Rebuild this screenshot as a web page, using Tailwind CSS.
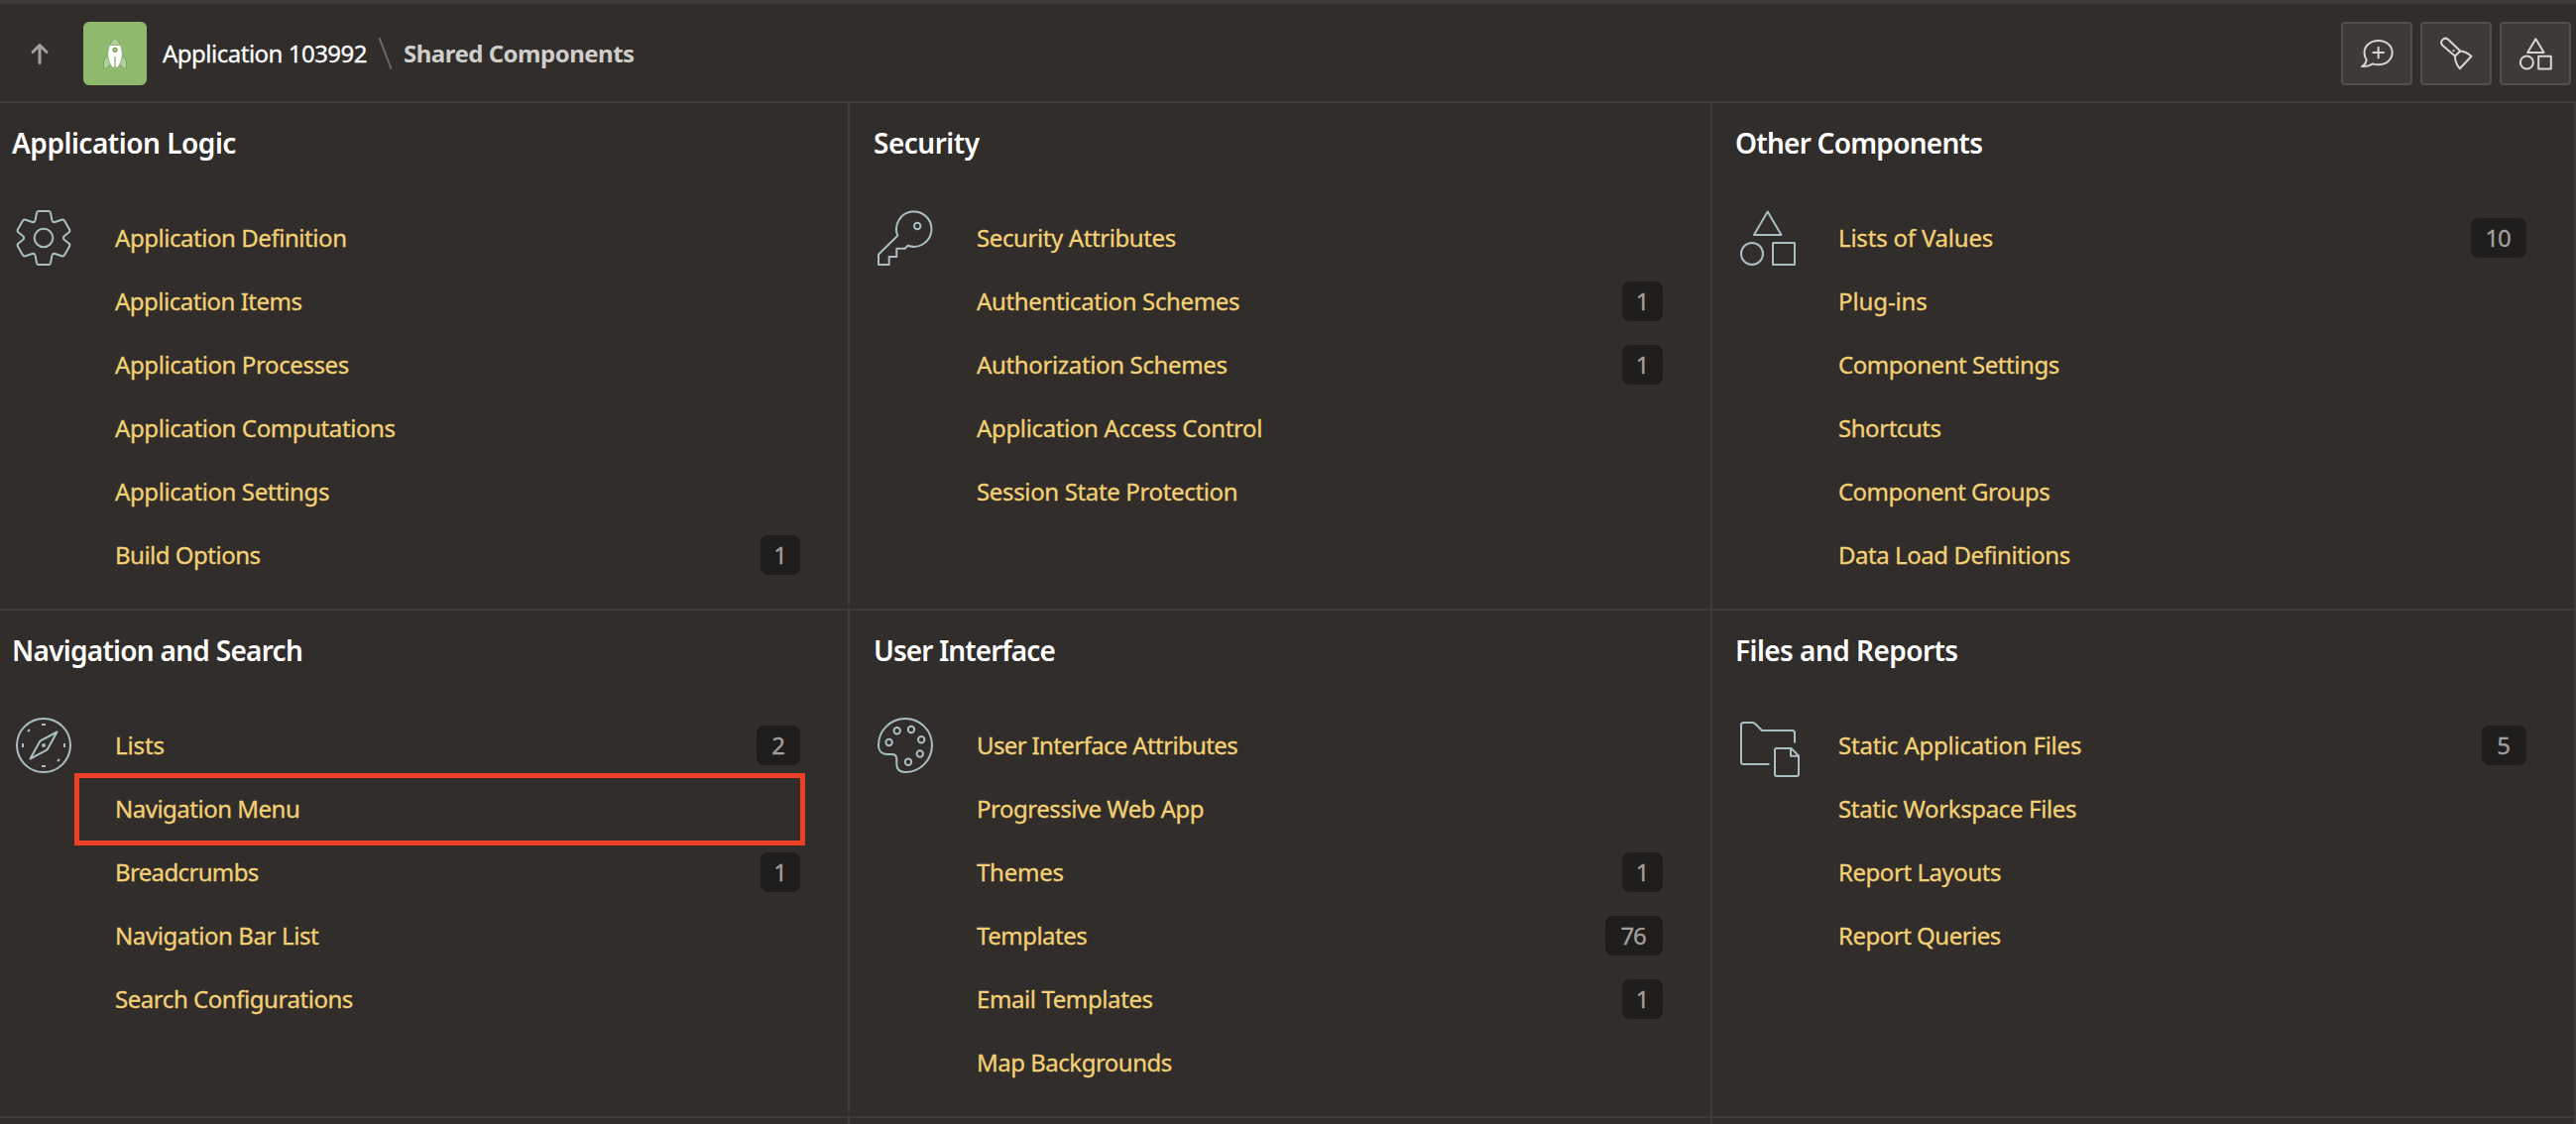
<!DOCTYPE html>
<html lang="en">
<head>
<meta charset="utf-8">
<title>Shared Components</title>
<script src="https://cdn.jsdelivr.net/npm/@tailwindcss/browser@4"></script>
</head>
<body class="h-[1134px] overflow-hidden bg-[#312d2a] font-['Noto_Sans','Open_Sans',sans-serif] text-[24px] leading-8 tracking-[-0.45px] text-white">
<header class="flex h-[104px] items-center border-t-4 border-b-2 border-[#3e3a37] pt-0.5 pr-[5px] pl-7">
  <a href="#" aria-label="Up"><svg class="size-6 text-[#a3a09d]" viewBox="0 0 24 24" fill="none" stroke="currentColor" stroke-width="3" stroke-linecap="round" stroke-linejoin="round"><path d="M12 21.500V3.500M5 10.500l7-7 7 7"/></svg></a>
  <span class="ml-8 flex size-16 items-center justify-center rounded-md bg-[#8fb96d]">
    <svg class="h-8 w-6 overflow-visible" viewBox="0 0 24 32">
      <path d="M5.500 18.500C2.500 20 .5 22 .5 25v6.500c1.300 0 2.300-.3 3-1L7.500 27zM18.500 18.500c3 1.500 5 3.500 5 6.500v6.500c-1.300 0-2.300-.3-3-1L16.500 27z" fill="#b2cf9b" stroke="#7aa55b"/>
      <path d="M12 .5C9.500 2.500 7.500 5 6.500 7.500h11C16.500 5 14.500 2.500 12 .5z" fill="#b2cf9b" stroke="#7aa55b"/>
      <path d="M6.500 7.500h11c2.500 7 2.500 14-2 21.500Q14.500 30.200 12 30.200T8.500 29C4 21.500 4 14.500 6.500 7.500z" fill="#fff" stroke="#8aad70" stroke-width=".8"/>
      <circle cx="12" cy="12.300" r="2" fill="#b2cf9b" stroke="#759f56" stroke-width="1.300"/>
      <path d="M12 19v12.500" stroke="#8fb072" stroke-width="1.400"/>
    </svg>
  </span>
  <nav class="flex items-center">
    <a href="#" class="ml-4 w-[216px] tracking-[-0.5px] [-webkit-text-stroke:0.3px]">Application 103992</a>
    <svg class="h-8 w-4 text-[#6c6966]" viewBox="0 0 16 32" fill="none" stroke="currentColor" stroke-width="2"><path d="M2.500 0l12 31.500"/></svg>
    <span class="ml-[11px] font-bold tracking-[-0.5px] text-[#d0cecb]">Shared Components</span>
  </nav>
  <div class="ml-auto flex gap-2 text-[#d8d6d3]">
    <button class="flex h-16 w-[72px] items-center justify-center rounded border-2 border-[#53504b] bg-[#3e3b36]"><svg class="size-8 overflow-visible" viewBox="0 0 32 32" fill="none" stroke="currentColor" stroke-width="2" stroke-linecap="round" stroke-linejoin="round"><path d="M17.700 2.900c8 0 14 5.400 14 12.200s-6 12.200-14 12.200c-2 0-4-.3-5.700-1-2 1.500-5.500 2.900-11 2.700 2.300-1.300 4.300-2.800 4.700-6.700-1.400-2-2.200-4.500-2.200-7.200 0-6.800 6.200-12.200 14.200-12.200zM17.700 9.800v10.600M12.400 15.100H23"/></svg></button>
    <button class="flex h-16 w-[72px] items-center justify-center rounded border-2 border-[#53504b] bg-[#3e3b36]"><svg class="size-8 overflow-visible" viewBox="0 0 32 32" fill="none" stroke="currentColor" stroke-width="2" stroke-linejoin="round"><path d="M15 18.500L2.300 7.700C-1 4 4-1.500 8 1.800L20.300 13.500 15 18.500M20.300 13.500c4 .3 7.500 2 11.200 5.300L19.800 31.200C16.700 27.500 14.800 23 15 18.500"/><circle cx="13.600" cy="13" r="1.100" fill="currentColor" stroke="none"/></svg></button>
    <button class="flex h-16 w-[72px] items-center justify-center rounded border-2 border-[#53504b] bg-[#3e3b36]"><svg class="size-8 overflow-visible" viewBox="0 0 32 32" fill="none" stroke="currentColor" stroke-width="2" stroke-linejoin="round"><path d="M16.400 1.300L24.600 15H8.200z"/><circle cx="7.400" cy="25" r="6.500"/><path d="M19.200 18.800h12.600v12.600H19.200z"/></svg></button>
  </div>
</header>

<main class="grid grid-cols-[857px_870px_871px] grid-rows-[512px_512px_6px] text-[#f4d175]">
  <section class="flex flex-col border-r-2 border-b-2 border-[#3e3a37] pt-6 pr-12 pl-3">
    <h2 class="text-[28px] font-semibold tracking-[-0.47px] text-white">Application Logic</h2>
    <div class="mt-12 flex pl-1">
      <svg class="mt-1 size-14 shrink-0 text-[#aabfc1]" viewBox="0 0 56 56" fill="none" stroke="currentColor" stroke-width="2" stroke-linejoin="round"><path d="M23 1h10q1.600 0 2 1.800l1.400 7.500q.7 2.300 3 1.700l7-2.300q1.800-.5 2.700 1l5 8.700q.8 1.600-.4 2.800l-4.700 3.800q-2.300 2 0 4l4.700 3.800q1.200 1.200.4 2.800l-5 8.700q-.9 1.500-2.700 1l-7-2.300q-2.300-.6-3 1.700L35 53.200q-.4 1.800-2 1.800H23q-1.600 0-2-1.800l-1.400-7.500q-.7-2.300-3-1.700l-7 2.300q-1.800.5-2.700-1l-5-8.700q-.8-1.600.4-2.800L7 30q2.300-2 0-4l-4.700-3.800q-1.200-1.200-.4-2.800l5-8.700q.9-1.500 2.700-1l7 2.300q2.300.6 3-1.700L21 2.800Q21.400 1 23 1z"/><circle cx="28" cy="28" r="9.300"/></svg>
      <ul class="ml-11 grow [-webkit-text-stroke:0.3px]">
        <li class="flex h-16 items-center"><a href="#">Application Definition</a></li>
        <li class="flex h-16 items-center"><a href="#" class="tracking-[-0.5px]">Application Items</a></li>
        <li class="flex h-16 items-center"><a href="#" class="tracking-[-0.4px]">Application Processes</a></li>
        <li class="flex h-16 items-center"><a href="#" class="tracking-[-0.4px]">Application Computations</a></li>
        <li class="flex h-16 items-center"><a href="#" class="tracking-[-0.4px]">Application Settings</a></li>
        <li class="flex h-16 items-center justify-between"><a href="#" class="tracking-[-0.5px]">Build Options</a><span class="flex h-10 w-10 items-center justify-center rounded-lg bg-[#201e1c] text-[#a3a19e]">1</span></li>
      </ul>
    </div>
  </section>

  <section class="flex flex-col border-r-2 border-b-2 border-[#3e3a37] pt-6 pr-12 pl-6">
    <h2 class="text-[28px] font-semibold tracking-[-0.5px] text-white">Security</h2>
    <div class="mt-12 flex pl-1">
      <svg class="mt-1 size-14 shrink-0 text-[#aabfc1]" viewBox="0 0 56 56" fill="none" stroke="currentColor" stroke-width="2" stroke-linejoin="round"><path d="M20.300 25.700A17.700 17.700 0 1 1 30.500 35.700l-2.800 3h-8.400V47h-7.600v8H1V44.700z"/><circle cx="40.200" cy="16" r="3.200"/></svg>
      <ul class="ml-11 grow [-webkit-text-stroke:0.3px]">
        <li class="flex h-16 items-center"><a href="#" class="tracking-[-0.4px]">Security Attributes</a></li>
        <li class="flex h-16 items-center justify-between"><a href="#" class="tracking-[-0.35px]">Authentication Schemes</a><span class="flex h-10 w-[41px] items-center justify-center rounded-lg bg-[#201e1c] text-[#a3a19e]">1</span></li>
        <li class="flex h-16 items-center justify-between"><a href="#" class="tracking-[-0.35px]">Authorization Schemes</a><span class="flex h-10 w-[41px] items-center justify-center rounded-lg bg-[#201e1c] text-[#a3a19e]">1</span></li>
        <li class="flex h-16 items-center"><a href="#" class="tracking-[-0.35px]">Application Access Control</a></li>
        <li class="flex h-16 items-center"><a href="#" class="tracking-[-0.35px]">Session State Protection</a></li>
      </ul>
    </div>
  </section>

  <section class="flex flex-col border-r-2 border-b-2 border-[#3e3a37] pt-6 pr-12 pl-6">
    <h2 class="-ml-px text-[28px] font-semibold tracking-[-0.75px] text-white">Other Components</h2>
    <div class="mt-12 flex pl-1">
      <svg class="mt-1 size-14 shrink-0 text-[#aabfc1]" viewBox="0 0 56 56" fill="none" stroke="currentColor" stroke-width="2" stroke-linejoin="round"><path d="M27.700 1.500L41.500 25H14z"/><circle cx="12" cy="44" r="11"/><rect x="33" y="33" width="22" height="22" rx=".5"/></svg>
      <ul class="ml-[43px] grow [-webkit-text-stroke:0.3px]">
        <li class="flex h-16 items-center justify-between"><a href="#" class="tracking-[-0.2px]">Lists of Values</a><span class="flex h-10 w-14 items-center justify-center rounded-lg bg-[#201e1c] pr-0.5 tracking-[-1.2px] text-[#a3a19e]">10</span></li>
        <li class="flex h-16 items-center"><a href="#" class="tracking-[-0.1px]">Plug-ins</a></li>
        <li class="flex h-16 items-center"><a href="#">Component Settings</a></li>
        <li class="flex h-16 items-center"><a href="#">Shortcuts</a></li>
        <li class="flex h-16 items-center"><a href="#" class="tracking-[-0.55px]">Component Groups</a></li>
        <li class="flex h-16 items-center"><a href="#">Data Load Definitions</a></li>
      </ul>
    </div>
  </section>

  <section class="flex flex-col border-r-2 border-b-2 border-[#3e3a37] pt-6 pr-12 pl-3">
    <h2 class="text-[28px] font-semibold tracking-[-0.72px] text-white">Navigation and Search</h2>
    <div class="mt-12 flex pl-1">
      <svg class="mt-1 size-14 shrink-0 text-[#aabfc1]" viewBox="0 0 56 56" fill="none" stroke="currentColor" stroke-width="2" stroke-linejoin="round"><circle cx="28" cy="28" r="27"/><path d="M26 7h4M26 49h4M7 26v4M49 26v4M12 14l2-2M42 44l2-2M41.500 14.500L24.300 23.700 14.500 41.500 31.700 32.300z"/><circle cx="28" cy="28" r="2" fill="currentColor" stroke="none"/></svg>
      <ul class="ml-11 grow [-webkit-text-stroke:0.3px]">
        <li class="flex h-16 items-center justify-between"><a href="#" class="tracking-[-0.1px]">Lists</a><span class="flex h-10 w-11 items-center justify-center rounded-lg bg-[#201e1c] text-[#a3a19e]">2</span></li>
        <li class="relative flex h-16 items-center"><a href="#" class="tracking-[-0.5px]">Navigation Menu</a><span class="pointer-events-none absolute -top-1 -right-[5px] -left-[41px] h-[73px] border-5 border-[#ee4026]"></span></li>
        <li class="flex h-16 items-center justify-between"><a href="#" class="tracking-[-0.65px]">Breadcrumbs</a><span class="flex h-10 w-10 items-center justify-center rounded-lg bg-[#201e1c] text-[#a3a19e]">1</span></li>
        <li class="flex h-16 items-center"><a href="#" class="tracking-[-0.4px]">Navigation Bar List</a></li>
        <li class="flex h-16 items-center"><a href="#">Search Configurations</a></li>
      </ul>
    </div>
  </section>

  <section class="flex flex-col border-r-2 border-b-2 border-[#3e3a37] pt-6 pr-12 pl-6">
    <h2 class="text-[28px] font-semibold tracking-[-0.93px] text-white">User Interface</h2>
    <div class="mt-12 flex pl-1">
      <svg class="mt-1 size-14 shrink-0 text-[#aabfc1]" viewBox="0 0 56 56" fill="none" stroke="currentColor" stroke-width="2" stroke-linejoin="round"><path d="M1 28a27 27 0 1 1 27 27c-6 0-8.700-3.500-8.700-8.500V42c0-3.500-1.300-5-4.800-5H10C4 37 1 33 1 28z"/><circle cx="11.600" cy="25" r="3.200"/><circle cx="19.700" cy="13.200" r="3.200"/><circle cx="34" cy="12" r="3.200"/><circle cx="44.200" cy="22.200" r="3.200"/><circle cx="42.800" cy="36.500" r="3.200"/><circle cx="31" cy="44.700" r="3.200"/></svg>
      <ul class="ml-11 grow [-webkit-text-stroke:0.3px]">
        <li class="flex h-16 items-center"><a href="#" class="tracking-[-0.63px]">User Interface Attributes</a></li>
        <li class="flex h-16 items-center"><a href="#" class="tracking-[-0.5px]">Progressive Web App</a></li>
        <li class="flex h-16 items-center justify-between"><a href="#" class="tracking-[-0.25px]">Themes</a><span class="flex h-10 w-[41px] items-center justify-center rounded-lg bg-[#201e1c] text-[#a3a19e]">1</span></li>
        <li class="flex h-16 items-center justify-between"><a href="#" class="tracking-[-0.5px]">Templates</a><span class="flex h-10 w-[58px] items-center justify-center rounded-lg bg-[#201e1c] pr-0.5 tracking-[-1.2px] text-[#a3a19e]">76</span></li>
        <li class="flex h-16 items-center justify-between"><a href="#" class="tracking-[-0.4px]">Email Templates</a><span class="flex h-10 w-[41px] items-center justify-center rounded-lg bg-[#201e1c] text-[#a3a19e]">1</span></li>
        <li class="flex h-16 items-center"><a href="#" class="tracking-[-0.5px]">Map Backgrounds</a></li>
      </ul>
    </div>
  </section>

  <section class="flex flex-col border-r-2 border-b-2 border-[#3e3a37] pt-6 pr-12 pl-6">
    <h2 class="-ml-px text-[28px] font-semibold tracking-[-0.55px] text-white">Files and Reports</h2>
    <div class="mt-12 flex pl-1">
      <svg class="mt-1 size-14 shrink-0 overflow-visible text-[#aabfc1]" viewBox="0 0 56 56" fill="none" stroke="currentColor" stroke-width="2" stroke-linejoin="round"><path d="M55 25.500V15.500q0-2.500-2.500-2.500H22L16 7q-2-2-4-2H3.500Q1 5 1 7.500v37Q1 47 3.500 47h26"/><path d="M36.500 31h15l7.500 7.500V57q0 2-2 2H36.500q-1.500 0-1.500-2V32.500q0-1.500 1.500-1.500zM51 31v7.700h8"/></svg>
      <ul class="ml-[43px] grow [-webkit-text-stroke:0.3px]">
        <li class="flex h-16 items-center justify-between"><a href="#" class="tracking-[-0.22px]">Static Application Files</a><span class="flex h-10 w-[45px] items-center justify-center rounded-lg bg-[#201e1c] pr-px text-[#a3a19e]">5</span></li>
        <li class="flex h-16 items-center"><a href="#" class="tracking-[-0.35px]">Static Workspace Files</a></li>
        <li class="flex h-16 items-center"><a href="#">Report Layouts</a></li>
        <li class="flex h-16 items-center"><a href="#" class="tracking-[-0.5px]">Report Queries</a></li>
      </ul>
    </div>
  </section>

  <div class="border-r-2 border-[#3e3a37]"></div>
  <div class="border-r-2 border-[#3e3a37]"></div>
  <div class="border-r-2 border-[#3e3a37]"></div>
</main>
</body>
</html>
